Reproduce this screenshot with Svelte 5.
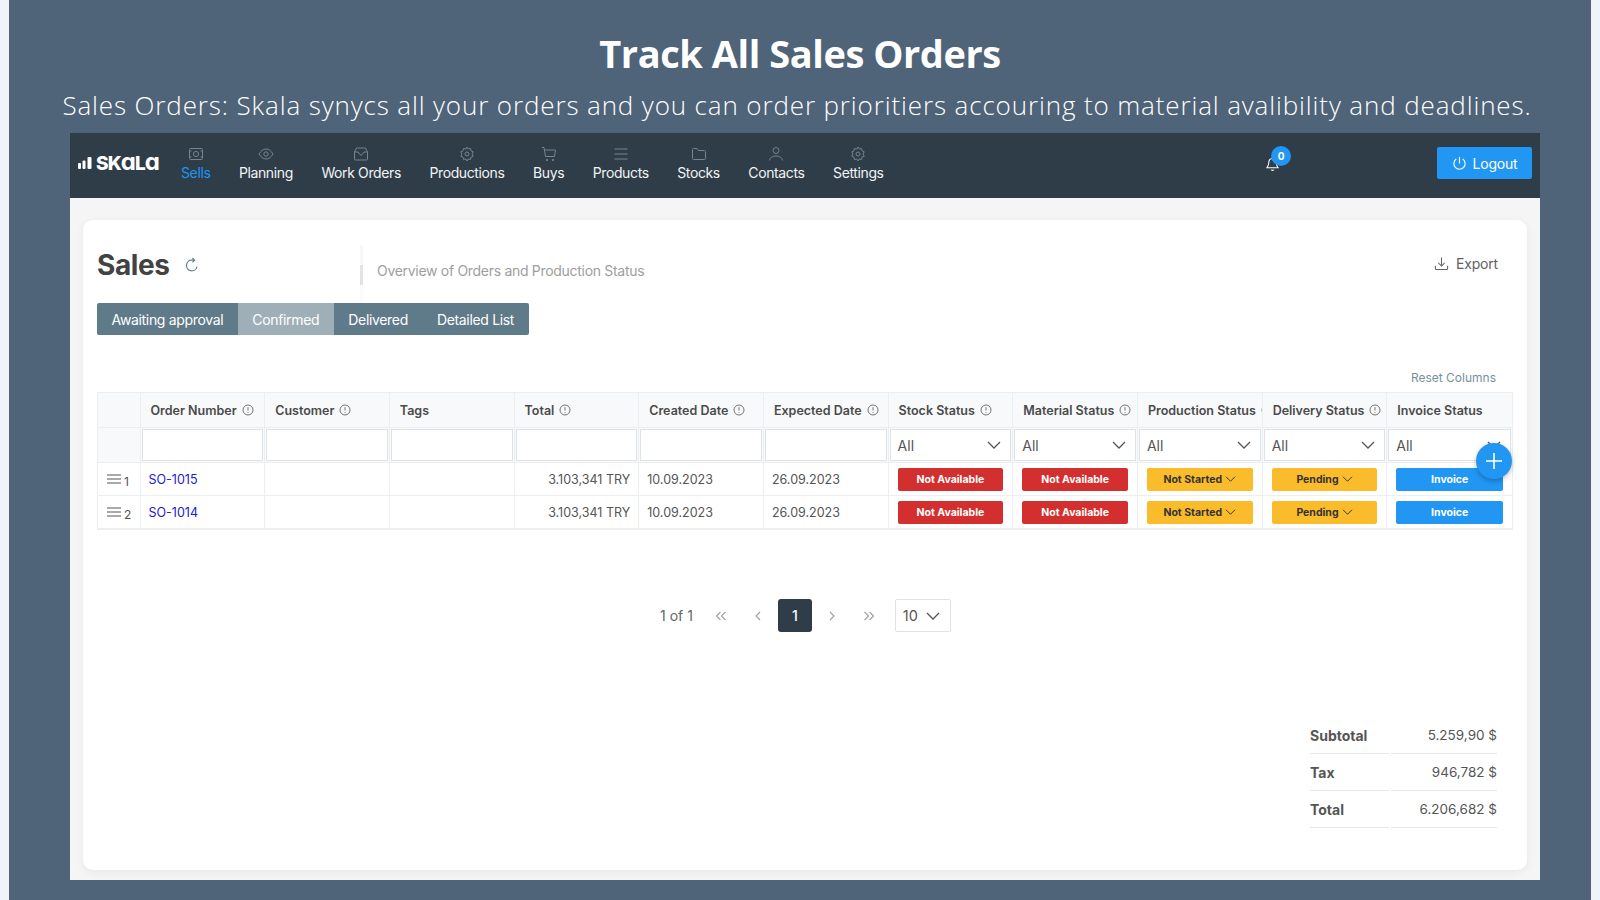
<script lang="ts">
  const columns = [
    { label: 'Order Number', info: true },
    { label: 'Customer', info: true },
    { label: 'Tags', info: false },
    { label: 'Total', info: true },
    { label: 'Created Date', info: true },
    { label: 'Expected Date', info: true },
    { label: 'Stock Status', info: true },
    { label: 'Material Status', info: true },
    { label: 'Production Status', info: true },
    { label: 'Delivery Status', info: true },
    { label: 'Invoice Status', info: false },
  ];

  const orders = [
    { index: 1, number: 'SO-1015', total: '3.103,341 TRY', created: '10.09.2023', expected: '26.09.2023' },
    { index: 2, number: 'SO-1014', total: '3.103,341 TRY', created: '10.09.2023', expected: '26.09.2023' },
  ];

  const navItems = ['Sells', 'Planning', 'Work Orders', 'Productions', 'Buys', 'Products', 'Stocks', 'Contacts', 'Settings'];
  const tabs = ['Awaiting approval', 'Confirmed', 'Delivered', 'Detailed List'];
  const totals = [
    { label: 'Subtotal', value: '5.259,90 $' },
    { label: 'Tax', value: '946,782 $' },
    { label: 'Total', value: '6.206,682 $' },
  ];
</script>

{#snippet info()}
  <svg class="info" viewBox="0 0 12 12" width="12" height="12" fill="none" stroke="currentColor" stroke-width="0.9">
    <circle cx="6" cy="6" r="5" />
    <path d="M6 3.2v3.4M6 8v.8" />
  </svg>
{/snippet}

{#snippet chevron(w, h)}
  <svg viewBox="0 0 14 8" width={w} height={h} fill="none" stroke="currentColor" stroke-width="1.3">
    <path d="M1 1l6 6 6-6" />
  </svg>
{/snippet}

{#snippet navIcon(name)}
  <svg viewBox="0 0 16 16" width="16" height="16" fill="none" stroke="currentColor" stroke-width="1">
    {#if name === 'Sells'}
      <rect x="1.5" y="2.5" width="13" height="11" rx="1" /><circle cx="8" cy="8" r="2.6" /><path d="M1.5 5h2M12.5 5h2M1.5 11h2M12.5 11h2" />
    {:else if name === 'Planning'}
      <path d="M1 8c2-3.4 4.4-5 7-5s5 1.6 7 5c-2 3.4-4.4 5-7 5s-5-1.600-7-5z" /><circle cx="8" cy="8" r="2.200" />
    {:else if name === 'Work Orders'}
      <path d="M3.500 2h9l2 4v7a1 1 0 0 1-1 1h-11a1 1 0 0 1-1-1V6z" /><path d="M1.500 6h3.500l3 3.500 3-3.500h3.500" />
    {:else if name === 'Productions' || name === 'Settings'}
      <circle cx="8" cy="8" r="2" /><path d="M8 1l1.200 2 2.300-.5.500 2.300 2.200 1-1.100 2.200 1.100 2.200-2.200 1-.5 2.300-2.300-.5L8 15l-1.200-2-2.300.5-.5-2.300-2.200-1L2.900 8 1.800 5.800l2.200-1 .5-2.300 2.300.5z" />
    {:else if name === 'Buys'}
      <path d="M1 1.500h2l1.500 9h9l1-6.500h-11" /><circle cx="6" cy="14" r=".7" fill="currentColor" /><circle cx="12" cy="14" r=".7" fill="currentColor" />
    {:else if name === 'Products'}
      <path d="M1.500 3h13M1.500 8h13M1.500 13h13" />
    {:else if name === 'Stocks'}
      <path d="M1.500 3.500a1 1 0 0 1 1-1h3.500l1.500 2h6a1 1 0 0 1 1 1v7a1 1 0 0 1-1 1h-11a1 1 0 0 1-1-1z" />
    {:else}
      <circle cx="8" cy="4.500" r="3" /><path d="M1.500 14.500c.5-3 3-4.500 6.500-4.500s6 1.500 6.500 4.500" />
    {/if}
  </svg>
{/snippet}

<div class="page">
  <h1>Track All Sales Orders</h1>
  <p class="lead">Sales Orders: Skala synycs all your orders and you can order prioritiers accouring to material avalibility and deadlines.</p>

  <div class="app">
    <nav class="topbar">
      <div class="logo">
        <svg viewBox="0 0 14 12" width="14" height="12" fill="#fff">
          <rect x="0" y="6" width="3" height="6" rx="1" />
          <rect x="4.500" y="3.500" width="3" height="8.500" rx="1" />
          <rect x="9.500" y="0" width="4" height="12" rx="1" />
        </svg>
        <span class="wordmark">SK<span class="round">a</span>L<span class="round">a</span></span>
      </div>
      <ul class="menu">
        {#each navItems as item, i}
          <li class:active={i === 0}>
            <span class="menu-icon">{@render navIcon(item)}</span>
            <span>{item}</span>
          </li>
        {/each}
      </ul>
      <div class="bell">
        <svg viewBox="0 0 16 16" width="15" height="15" fill="none" stroke="#fff" stroke-width="1.100">
          <path d="M8 1.500c-2.600 0-4 2-4 4.500 0 3-1.500 4.500-2 5.500h12c-.5-1-2-2.500-2-5.500 0-2.500-1.400-4.500-4-4.500zM6.500 13.500c.4 1 2.600 1 3 0" />
        </svg>
        <span class="badge">0</span>
      </div>
      <button class="logout">
        <svg viewBox="0 0 16 16" width="15" height="15" fill="none" stroke="#fff" stroke-width="1.200">
          <path d="M8 1v7M4.500 3.200a6 6 0 1 0 7 0" />
        </svg>
        Logout
      </button>
    </nav>

    <main class="workspace">
      <section class="card">
        <header class="card-head">
          <div class="title">
            <h2>Sales</h2>
            <svg viewBox="0 0 16 16" width="16" height="16" fill="none" stroke="#5f7f8c" stroke-width="1.200">
              <path d="M13 9.500A5.300 5.300 0 1 1 8 3.200h2M8.500 1l2 2.200-2 2.200" />
            </svg>
          </div>
          <div class="divider"></div>
          <span class="overview">Overview of Orders and Production Status</span>
          <button class="export">
            <svg viewBox="0 0 16 16" width="15" height="15" fill="none" stroke="currentColor" stroke-width="1.100">
              <path d="M8 1.500v9M4.500 7.200L8 10.700l3.500-3.500M1.500 10.500v3a1 1 0 0 0 1 1h11a1 1 0 0 0 1-1v-3" />
            </svg>
            Export
          </button>
        </header>

        <div class="tabs">
          {#each tabs as tab, i}
            <button class="tab" class:current={i === 1}>{tab}</button>
          {/each}
        </div>

        <div class="reset">Reset Columns</div>

        <div class="table">
          <div class="row head">
            <div class="cell"></div>
            {#each columns as col}
              <div class="cell">
                <span class="col-label">{col.label}</span>
                {#if col.info}{@render info()}{/if}
              </div>
            {/each}
          </div>

          <div class="row filters">
            <div class="cell"></div>
            {#each columns as col, i}
              <div class="cell">
                <div class="filter">
                  {#if i >= 6}
                    <span>All</span>
                    {@render chevron(14, 8)}
                  {/if}
                </div>
              </div>
            {/each}
          </div>

          {#each orders as order}
            <div class="row body">
              <div class="cell handle">
                <svg viewBox="0 0 14 10" width="14" height="10" fill="none" stroke="#555" stroke-width="1.200">
                  <path d="M0 1h14M0 5h14M0 9h14" />
                </svg>
                <span>{order.index}</span>
              </div>
              <div class="cell"><span class="link">{order.number}</span></div>
              <div class="cell"></div>
              <div class="cell"></div>
              <div class="cell right">{order.total}</div>
              <div class="cell">{order.created}</div>
              <div class="cell">{order.expected}</div>
              <div class="cell pad"><span class="status red">Not Available</span></div>
              <div class="cell pad"><span class="status red">Not Available</span></div>
              <div class="cell pad"><span class="status yellow">Not Started {@render chevron(11, 6)}</span></div>
              <div class="cell pad"><span class="status yellow">Pending {@render chevron(11, 6)}</span></div>
              <div class="cell pad"><span class="status blue">Invoice</span></div>
            </div>
          {/each}

          <button class="fab" aria-label="Add">
            <svg viewBox="0 0 18 18" width="18" height="18" fill="none" stroke="#fff" stroke-width="1.600">
              <path d="M9 1v16M1 9h16" />
            </svg>
          </button>
        </div>

        <div class="pager">
          <span class="count">1 of 1</span>
          <svg class="arrow" viewBox="0 0 12 10" width="12" height="10" fill="none" stroke="currentColor" stroke-width="1.100"><path d="M5.500 1l-4 4 4 4M10.500 1l-4 4 4 4" /></svg>
          <svg class="arrow" viewBox="0 0 12 10" width="12" height="10" fill="none" stroke="currentColor" stroke-width="1.100"><path d="M8 1L4 5l4 4" /></svg>
          <span class="page-no">1</span>
          <svg class="arrow" viewBox="0 0 12 10" width="12" height="10" fill="none" stroke="currentColor" stroke-width="1.100"><path d="M4 1l4 4-4 4" /></svg>
          <svg class="arrow" viewBox="0 0 12 10" width="12" height="10" fill="none" stroke="currentColor" stroke-width="1.100"><path d="M1.500 1l4 4-4 4M6.500 1l4 4-4 4" /></svg>
          <div class="size">
            <span>10</span>
            {@render chevron(14, 8)}
          </div>
        </div>

        <div class="totals">
          {#each totals as t}
            <div class="total-row">
              <span class="total-label">{t.label}</span>
              <span class="total-value">{t.value}</span>
            </div>
          {/each}
        </div>
      </section>
    </main>
  </div>
</div>

<style>
  :global(body) {
    margin: 0;
    background: #eef4f8;
    overflow: hidden;
  }

  * {
    box-sizing: border-box;
  }

  .page {
    width: 1582px;
    height: 900px;
    margin-left: 9px;
    background: #4f6379;
    color: #fff;
    overflow: hidden;
    font-family: Inter, sans-serif;
  }

  h1 {
    margin: 28px 0 0;
    height: 50px;
    text-align: center;
    font-family: 'Open Sans', sans-serif;
    font-size: 38px;
    line-height: 50px;
    font-weight: 700;
    letter-spacing: -0.45px;
  }

  .lead {
    margin: 8px 0 0;
    height: 38px;
    padding-right: 6px;
    text-align: center;
    font-family: 'Open Sans', sans-serif;
    font-size: 26px;
    line-height: 38px;
    font-weight: 300;
    letter-spacing: 0.87px;
    white-space: nowrap;
  }

  .app {
    margin: 9px 0 0 61px;
    width: 1470px;
    height: 747px;
    display: flex;
    flex-direction: column;
    background: #f5f5f5;
  }

  .topbar {
    height: 65px;
    flex: none;
    display: flex;
    align-items: center;
    padding: 0 8px;
    background: #2e3d48;
  }

  .logo {
    width: 103px;
    flex: none;
    display: flex;
    align-items: center;
    gap: 4px;
    margin-top: -6px;
  }

  .wordmark {
    font-size: 19px;
    line-height: 20px;
    font-weight: 800;
    letter-spacing: -0.9px;
    font-feature-settings: 'cv11';
  }

  .round {
    font-size: 24px;
    line-height: 20px;
    font-weight: 700;
  }

  .menu {
    display: flex;
    gap: 28.500px;
    list-style: none;
    margin: -5px 0 0;
    padding: 0;
    font-size: 14px;
    letter-spacing: -0.38px;
    color: #f2f4f5;
  }

  .menu li {
    display: flex;
    flex-direction: column;
    align-items: center;
    gap: 1px;
  }

  .menu .active {
    color: #2196f3;
  }

  .menu-icon {
    height: 18px;
    color: #76848d;
    display: flex;
    align-items: center;
  }

  .bell {
    position: relative;
    margin-left: auto;
    margin-right: 157px;
    height: 15px;
    margin-top: -4px;
  }

  .badge {
    position: absolute;
    left: 6px;
    top: -10px;
    width: 20px;
    height: 20px;
    border-radius: 50%;
    background: #2196f3;
    font-size: 10px;
    font-weight: 700;
    line-height: 20px;
    text-align: center;
  }

  .logout {
    width: 95px;
    height: 32px;
    margin-top: -5px;
    display: flex;
    align-items: center;
    justify-content: center;
    gap: 6px;
    border: 0;
    border-radius: 2px;
    background: #2196f3;
    color: #fff;
    font: 14px Inter, sans-serif;
    letter-spacing: -0.2px;
  }

  .workspace {
    flex: 1;
    padding: 22px 13px 10px;
    min-height: 0;
  }

  .card {
    height: 100%;
    padding: 0 14px;
    background: #fff;
    border-radius: 10px;
    box-shadow: 0 2px 10px rgba(0, 0, 0, 0.06);
    display: flex;
    flex-direction: column;
  }

  .card-head {
    height: 83px;
    flex: none;
    display: flex;
    align-items: flex-start;
    padding-top: 26px;
    color: #424242;
  }

  .title {
    width: 263px;
    display: flex;
    align-items: center;
    gap: 14px;
  }

  h2 {
    margin: 0;
    font-size: 28px;
    line-height: 38px;
    font-weight: 700;
    letter-spacing: -0.4px;
  }

  .divider {
    width: 3px;
    height: 20px;
    margin-top: 19px;
    background: #e3e3e3;
    box-shadow: 0 -20px 0 #f8f8f8, 0 20px 0 #fbfbfb;
  }

  .overview {
    margin: 15px 0 0 14px;
    font-size: 14px;
    line-height: 20px;
    letter-spacing: -0.3px;
    color: #9e9e9e;
  }

  .export {
    margin: 9px 15px 0 auto;
    display: flex;
    align-items: center;
    gap: 7px;
    padding: 0;
    border: 0;
    background: none;
    color: #616161;
    font: 14px Inter, sans-serif;
    letter-spacing: -0.2px;
  }

  .tabs {
    display: flex;
    align-self: flex-start;
    height: 32px;
    flex: none;
    background: #5f7a88;
    border-radius: 2px;
    overflow: hidden;
  }

  .tab {
    padding: 0 14.500px;
    border: 0;
    background: none;
    color: #fff;
    font: 14px Inter, sans-serif;
    letter-spacing: -0.33px;
  }

  .tab.current {
    background: #9eafb7;
  }

  .reset {
    margin: 35px 17px 0 0;
    height: 22px;
    flex: none;
    text-align: right;
    color: #78909c;
    font-size: 12px;
    line-height: 16px;
  }

  .table {
    position: relative;
    flex: none;
    border: 1px solid #eceff1;
    border-top: 0;
    color: #555;
    font-size: 12.500px;
  }

  .row {
    display: grid;
    grid-template-columns: 42.500px repeat(11, 1fr);
    border-bottom: 1px solid #eceff1;
  }

  .row.head {
    height: 36px;
    background: #f8f9fa;
    color: #4a4a4a;
    font-weight: 600;
    border-top: 1px solid #eceff1;
  }

  .row.filters {
    height: 35px;
    background: #f8f9fa;
  }

  .row.body {
    height: 33px;
    background: #fff;
  }

  .cell {
    display: flex;
    align-items: center;
    gap: 5px;
    min-width: 0;
    padding: 0 8px;
    border-right: 1px solid #eceff1;
    white-space: nowrap;
    overflow: hidden;
  }

  .cell:last-child {
    border-right: 0;
  }

  .head .cell {
    padding: 0 10px;
  }

  .filters .cell {
    padding: 1px;
  }

  .filter {
    width: 100%;
    height: 100%;
    display: flex;
    align-items: center;
    justify-content: space-between;
    padding: 0 9px 0 7px;
    background: #fff;
    border: 1px solid #dfe3e6;
    color: #555;
    font-size: 14px;
  }

  .info {
    flex: none;
    color: #666;
  }

  .handle {
    gap: 3px;
    padding: 0 0 0 9px;
    font-size: 12px;
  }

  .handle span {
    margin-top: 4px;
  }

  .link {
    color: #2020d8;
    font-size: 12.500px;
  }

  .right {
    justify-content: flex-end;
  }

  .pad {
    padding: 0 9px;
  }

  .status {
    width: 100%;
    height: 23px;
    display: flex;
    align-items: center;
    justify-content: center;
    gap: 3px;
    border-radius: 2px;
    font-size: 10.500px;
    font-weight: 700;
    color: #fff;
  }

  .status.red {
    background: #d32f2f;
  }

  .status.yellow {
    background: #fbbc2c;
    color: #333;
  }

  .status.blue {
    background: #2196f3;
  }

  .fab {
    position: absolute;
    right: 0;
    top: 51px;
    width: 36px;
    height: 36px;
    display: flex;
    align-items: center;
    justify-content: center;
    padding: 0;
    border: 0;
    border-radius: 50%;
    background: #2196f3;
    box-shadow: 0 2px 5px rgba(0, 0, 0, 0.25);
  }

  .pager {
    margin-top: 69px;
    height: 33px;
    flex: none;
    display: flex;
    align-items: center;
    padding-left: 563px;
    color: #666;
    font-size: 14px;
  }

  .count {
    margin-right: 22px;
  }

  .arrow {
    flex: none;
    margin-right: 25px;
    color: #9e9e9e;
  }

  .page-no {
    width: 34px;
    height: 33px;
    margin-right: 14px;
    margin-left: -11px;
    display: flex;
    align-items: center;
    justify-content: center;
    border-radius: 3px;
    background: #2e3d48;
    color: #fff;
    font-weight: 500;
  }

  .size {
    width: 56px;
    height: 33px;
    display: flex;
    align-items: center;
    justify-content: space-between;
    padding: 0 10px 0 7px;
    margin-left: -5px;
    border: 1px solid #dfe3e6;
    border-radius: 2px;
    color: #555;
    font-size: 14.500px;
  }

  .totals {
    align-self: flex-end;
    width: 187px;
    margin: 85px 16px 0 0;
    font-size: 13.500px;
    color: #555;
  }

  .total-row {
    display: grid;
    grid-template-columns: 79px 1fr;
    gap: 2px;
  }

  .total-row span {
    height: 37px;
    display: flex;
    align-items: center;
    border-bottom: 1px solid #e8e8e8;
  }

  .total-label {
    font-weight: 700;
    font-size: 14px;
  }

  .total-value {
    justify-content: flex-end;
  }
</style>
